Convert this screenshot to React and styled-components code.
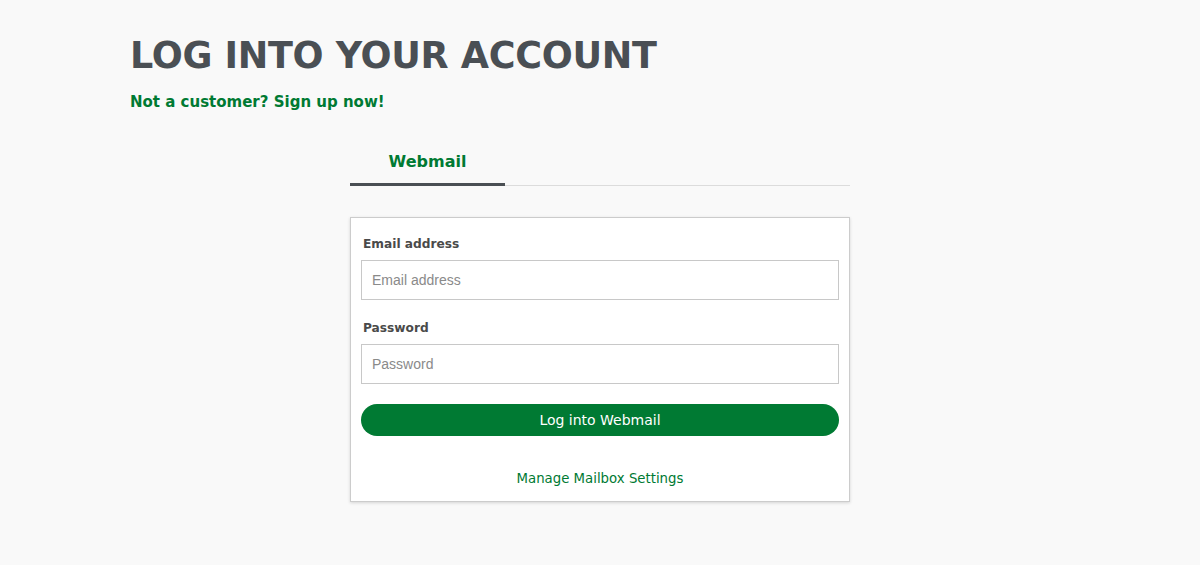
import React from "react";
import styled, { createGlobalStyle } from "styled-components";

const Global = createGlobalStyle`
  html, body { margin: 0; padding: 0; background: #f9f9f9; }
  body { font-family: "DejaVu Sans", "Noto Sans", sans-serif; color: #4a4f54; }
  * { box-sizing: border-box; }
`;

const Page = styled.div`
  width: 1200px;
  height: 565px;
  padding: 33px 0 0 130px;
`;

const Title = styled.h1`
  margin: 0;
  font-size: 36.5px;
  line-height: 46px;
  font-weight: 700;
  color: #4a4f54;
  letter-spacing: -0.3px;
`;

const SignUp = styled.a`
  display: block;
  margin-top: 13px;
  font-size: 15px;
  line-height: 20px;
  font-weight: 700;
  color: #007a33;
  text-decoration: none;
`;

const Panel = styled.div`
  width: 500px;
  margin: 28px 0 0 220px;
`;

const Tabs = styled.div`
  display: flex;
  border-bottom: 1px solid #dcdcdc;
`;

const Tab = styled.div`
  width: 155px;
  text-align: center;
  font-size: 16px;
  font-weight: 700;
  line-height: 20px;
  padding: 12px 0 11px;
  color: #007a33;
  border-bottom: 3px solid ${(p) => (p.$active ? "#4a4f54" : "transparent")};
  margin-bottom: -1px;
`;

const Card = styled.form`
  margin-top: 31px;
  background: #fff;
  border: 1px solid #cccccc;
  box-shadow: 0 1px 3px rgba(0, 0, 0, 0.15);
  padding: 18px 10px 14px 10px;
`;

const Label = styled.label`
  display: block;
  font-size: 12.2px;
  font-weight: 700;
  line-height: 16px;
  color: #4a4a4a;
  padding-left: 2px;
  margin-bottom: 8px;
`;

const Input = styled.input`
  display: block;
  width: 100%;
  height: 40px;
  border: 1px solid #c8c8c8;
  padding: 0 10px;
  font-family: "Liberation Sans", Arial, sans-serif;
  font-size: 14px;
  color: #333;
  background: #fff;
  outline: none;
  margin-bottom: ${(p) => p.$mb || 0}px;
  &::placeholder { color: #8a8a8a; }
`;

const Button = styled.button`
  display: block;
  width: 100%;
  height: 32px;
  margin-top: 20px;
  border: none;
  border-radius: 16px;
  background: #007a33;
  color: #fff;
  font-family: "DejaVu Sans", sans-serif;
  font-size: 14px;
  cursor: pointer;
`;

const Manage = styled.a`
  display: block;
  margin-top: 35px;
  text-align: center;
  font-size: 13.3px;
  line-height: 16px;
  color: #007a33;
  text-decoration: none;
`;

export default function App() {
  return (
    <>
      <Global />
      <Page>
        <Title>LOG INTO YOUR ACCOUNT</Title>
        <SignUp href="#">Not a customer? Sign up now!</SignUp>
        <Panel>
          <Tabs>
            <Tab $active>Webmail</Tab>
          </Tabs>
          <Card onSubmit={(e) => e.preventDefault()}>
            <Label>Email address</Label>
            <Input placeholder="Email address" $mb={20} />
            <Label>Password</Label>
            <Input type="password" placeholder="Password" />
            <Button type="submit">Log into Webmail</Button>
            <Manage href="#">Manage Mailbox Settings</Manage>
          </Card>
        </Panel>
      </Page>
    </>
  );
}
